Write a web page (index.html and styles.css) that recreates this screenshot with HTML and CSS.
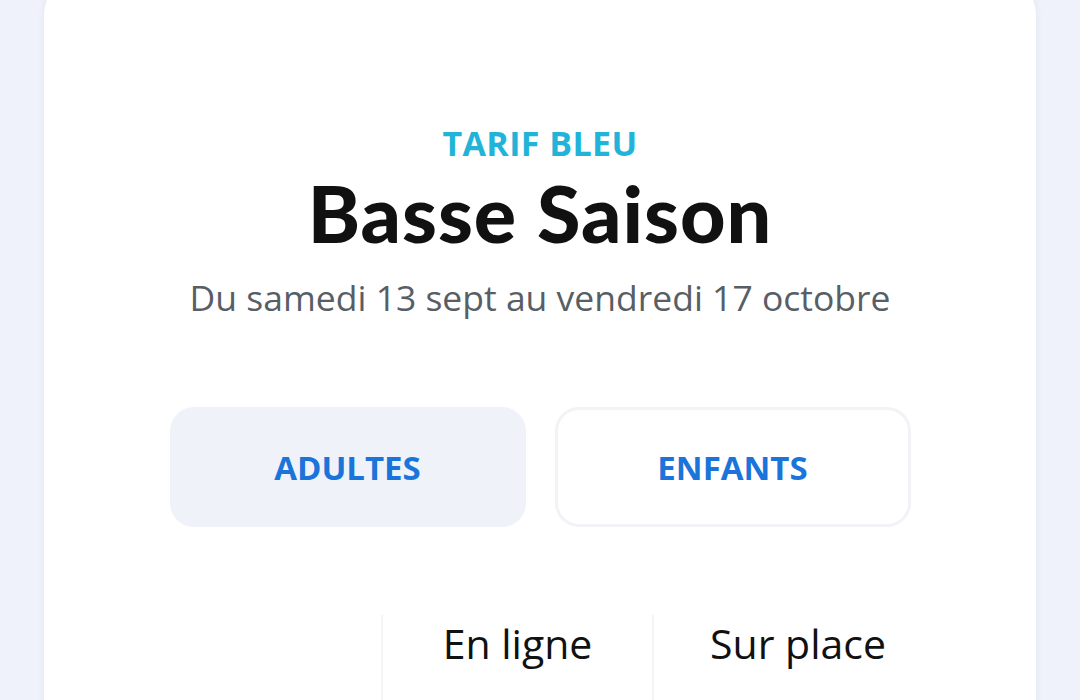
FILE: index.html
```html
<!DOCTYPE html>
<html lang="fr">
<head>
    <meta charset="UTF-8">
    <title>Tarif bleu - Basse saison</title>
    <link rel="stylesheet" href="styles.css">
</head>
<body>
    <div class="card">
        <div class="eyebrow">TARIF BLEU</div>
        <h1 class="title">Basse Saison</h1>
        <p class="dates">Du samedi 13 sept au vendredi 17 octobre</p>

        <div class="tabs">
            <button class="tab active">ADULTES</button>
            <button class="tab">ENFANTS</button>
        </div>

        <div class="prices">
            <div class="cell label"></div>
            <div class="cell head">En ligne</div>
            <div class="cell head">Sur place</div>
        </div>
    </div>
</body>
</html>
```

FILE: styles.css
```css
body {
    margin: 0;
    background-color: #eff2fa;
    font-family: 'Open Sans', sans-serif;
    height: 100vh;
    overflow: hidden;
}

.card {
    margin: -20px 44px 0 44px;
    height: 800px;
    background-color: #ffffff;
    border-radius: 34px;
    box-shadow: 0 0 6px rgba(200, 205, 215, 0.35);
    padding-top: 143px;
    box-sizing: border-box;
    display: flex;
    flex-direction: column;
    align-items: center;
}

.eyebrow {
    font-size: 34px;
    line-height: 40px;
    font-weight: 700;
    color: #22b4d8;
    letter-spacing: 0.4px;
}

.title {
    font-family: 'Lato', sans-serif;
    font-weight: 900;
    font-size: 79px;
    line-height: 80px;
    letter-spacing: 1px;
    color: #111111;
    margin: 10px 0 0 0;
}

.dates {
    font-size: 35.5px;
    line-height: 44px;
    color: #585e66;
    margin: 22px 0 0 0;
}

.tabs {
    display: flex;
    gap: 29px;
    margin-top: 88px;
}

.tab {
    width: 356px;
    height: 120px;
    border-radius: 24px;
    border: 3px solid #f1f3f7;
    background-color: #ffffff;
    color: #1b74da;
    font-family: 'Open Sans', sans-serif;
    font-weight: 700;
    font-size: 33px;
    cursor: pointer;
}

.tab.active {
    background-color: #eff3f9;
    border-color: #eff3f9;
}

.prices {
    display: grid;
    grid-template-columns: 211px 271px 290px;
    margin-top: 88px;
    align-self: flex-start;
    margin-left: 126px;
    height: 200px;
}

.cell {
    text-align: center;
    font-size: 41px;
    line-height: 56px;
    color: #111111;
}

.head {
    border-left: 2px solid #f2f4f7;
}
```
